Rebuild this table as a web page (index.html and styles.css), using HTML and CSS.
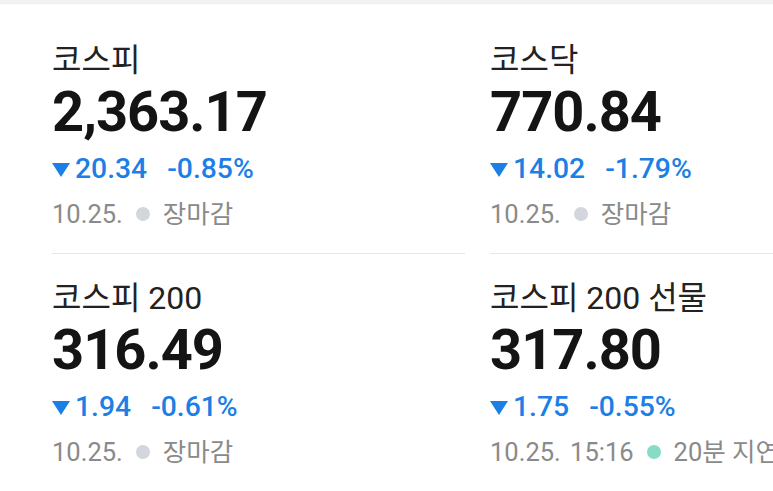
FILE: index.html
```html
<!DOCTYPE html>
<html lang="ko">
<head>
<meta charset="utf-8">
<link rel="stylesheet" href="styles.css">
</head>
<body>
<div class="band"></div>
<div class="grid">
  <div class="cell top">
    <div class="name">코스피</div>
    <div class="value">2,363.17</div>
    <div class="change"><svg class="tri" viewBox="0 0 18 14" width="18" height="14"><polygon points="0,0 18,0 9,14" fill="#1b7fe6"/></svg><span class="pt">20.34</span><span class="pct">-0.85%</span></div>
    <div class="meta"><span>10.25.</span><span class="dot gray"></span><span>장마감</span></div>
  </div>
  <div class="cell top">
    <div class="name">코스닥</div>
    <div class="value">770.84</div>
    <div class="change"><svg class="tri" viewBox="0 0 18 14" width="18" height="14"><polygon points="0,0 18,0 9,14" fill="#1b7fe6"/></svg><span class="pt">14.02</span><span class="pct">-1.79%</span></div>
    <div class="meta"><span>10.25.</span><span class="dot gray"></span><span>장마감</span></div>
  </div>
  <div class="cell bottom">
    <div class="name">코스피 200</div>
    <div class="value">316.49</div>
    <div class="change"><svg class="tri" viewBox="0 0 18 14" width="18" height="14"><polygon points="0,0 18,0 9,14" fill="#1b7fe6"/></svg><span class="pt">1.94</span><span class="pct">-0.61%</span></div>
    <div class="meta"><span>10.25.</span><span class="dot gray"></span><span>장마감</span></div>
  </div>
  <div class="cell bottom">
    <div class="name">코스피 200 선물</div>
    <div class="value">317.80</div>
    <div class="change"><svg class="tri" viewBox="0 0 18 14" width="18" height="14"><polygon points="0,0 18,0 9,14" fill="#1b7fe6"/></svg><span class="pt">1.75</span><span class="pct">-0.55%</span></div>
    <div class="meta"><span class="when">10.25. 15:16</span><span class="dot teal"></span><span>20분 지연</span></div>
  </div>
</div>
</body>
</html>
```
FILE: styles.css
```css
html, body {
  margin: 0;
  padding: 0;
  background: #ffffff;
  width: 773px;
  height: 491px;
  overflow: hidden;
}
body {
  font-family: Roboto, "Noto Sans CJK KR", sans-serif;
}
.band {
  height: 4px;
  background: #f1f2f4;
  border-bottom: 1px solid #eceef0;
  box-sizing: border-box;
}
.grid {
  display: grid;
  grid-template-columns: 413px minmax(0, 1fr);
  column-gap: 25px;
  padding-left: 52px;
}
.cell {
  white-space: nowrap;
  min-width: 0;
  overflow: hidden;
}
.cell.top {
  padding-top: 38px;
  padding-bottom: 24px;
  border-bottom: 1px solid #e6e6e6;
}
.cell.bottom {
  padding-top: 26px;
}
.name {
  font-size: 32px;
  line-height: 36px;
  color: #222222;
}
.value {
  margin-top: 2px;
  font-size: 56px;
  line-height: 64px;
  font-weight: 700;
  letter-spacing: -1px;
  color: #141414;
}
.change {
  margin-top: 8px;
  font-size: 28.3px;
  line-height: 34px;
  font-weight: 500;
  color: #1b7fe6;
  display: flex;
  align-items: center;
}
.tri {
  flex: none;
  margin-right: 5px;
  margin-top: 2px;
}
.pct {
  margin-left: 20px;
}
.meta {
  margin-top: 13px;
  font-size: 25.5px;
  line-height: 30px;
  color: #8a8a8a;
  display: flex;
  align-items: center;
}
.when {
  word-spacing: 3px;
}
.dot {
  flex: none;
  width: 14px;
  height: 14px;
  border-radius: 50%;
  margin: 0 13px 0 13px;
}
.dot.gray { background: #d3d6dd; }
.dot.teal { background: #86dcc4; }
```
